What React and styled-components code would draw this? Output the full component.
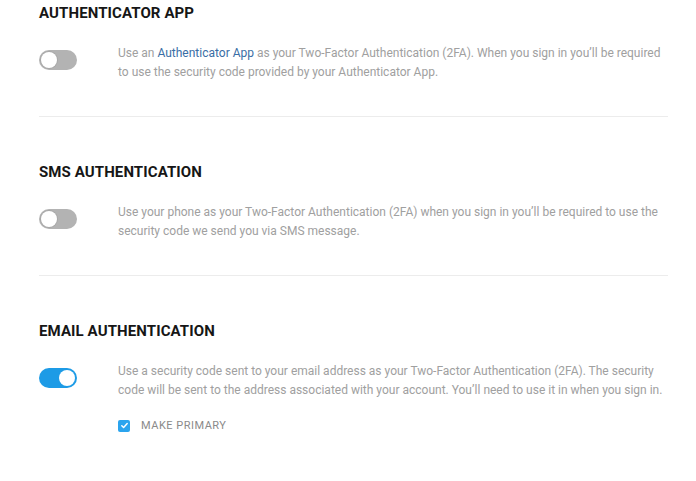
import styled, { createGlobalStyle } from "styled-components";

const GlobalStyle = createGlobalStyle`
  body {
    margin: 0;
    background: #ffffff;
    font-family: Roboto, "Liberation Sans", sans-serif;
  }
`;

const Page = styled.div`
  padding: 0 28px 0 39px;
`;

const Section = styled.section`
  padding: ${(p) => (p.$last ? "0" : "0 0 34px")};
  border-bottom: ${(p) => (p.$last ? "none" : "1px solid #ececec")};
  & + & {
    padding-top: 42px;
  }
`;

const Title = styled.h2`
  margin: 0;
  font-size: 15px;
  line-height: 26px;
  font-weight: 700;
  color: #161616;
  letter-spacing: 0.1px;
`;

const Row = styled.div`
  display: flex;
  align-items: flex-start;
  gap: 41px;
  margin-top: 18px;
`;

const Toggle = styled.button`
  position: relative;
  flex-shrink: 0;
  width: 38px;
  height: 20px;
  margin-top: 6px;
  padding: 0;
  border: none;
  border-radius: 10px;
  background: ${(p) => (p.$on ? "#1d9be6" : "#b3b3b3")};
  cursor: pointer;
`;

const Knob = styled.span`
  position: absolute;
  top: 2px;
  left: ${(p) => (p.$on ? "20px" : "2px")};
  width: 16px;
  height: 16px;
  border-radius: 50%;
  background: #fff;
  box-shadow: ${(p) => (p.$on ? "none" : "0 0 0 1px #a8a8a8")};
`;

const Body = styled.div`
  flex: 1;
`;

const Text = styled.p`
  margin: 0;
  font-size: 12px;
  line-height: 19px;
  color: #a0a0a0;
`;

const Link = styled.a`
  color: #3a6ea5;
  text-decoration: none;
`;

const CheckRow = styled.label`
  display: flex;
  align-items: center;
  gap: 11px;
  margin-top: 19px;
  font-size: 11px;
  color: #8a8a8a;
  letter-spacing: 0.5px;
`;

const Box = styled.span`
  display: flex;
  align-items: center;
  justify-content: center;
  width: 12px;
  height: 12px;
  border-radius: 2px;
  background: #2ba4ee;
`;

const sections = [
  {
    title: "AUTHENTICATOR APP",
    on: false,
    text: (
      <>
        Use an <Link href="#">Authenticator App</Link> as your Two-Factor Authentication (2FA). When you sign in
        you’ll be required to use the security code provided by your Authenticator App.
      </>
    ),
  },
  {
    title: "SMS AUTHENTICATION",
    on: false,
    text: (
      <>
        Use your phone as your Two-Factor Authentication (2FA) when you sign in you’ll be required to use the
        security code we send you via SMS message.
      </>
    ),
  },
  {
    title: "EMAIL AUTHENTICATION",
    on: true,
    primary: true,
    text: (
      <>
        Use a security code sent to your email address as your Two-Factor Authentication (2FA). The security
        code will be sent to the address associated with your account. You’ll need to use it in when you sign in.
      </>
    ),
  },
];

export default function App() {
  return (
    <>
      <GlobalStyle />
      <Page>
        {sections.map((s, i) => (
          <Section key={s.title} $last={i === sections.length - 1}>
            <Title>{s.title}</Title>
            <Row>
              <Toggle $on={s.on} aria-label={s.title}>
                <Knob $on={s.on} />
              </Toggle>
              <Body>
                <Text>{s.text}</Text>
                {s.primary && (
                  <CheckRow>
                    <Box>
                      <svg width="9" height="9" viewBox="0 0 10 10" fill="none">
                        <path d="M2 5.2l2 2 4-4.4" stroke="#fff" strokeWidth="1.6" strokeLinecap="round" strokeLinejoin="round" />
                      </svg>
                    </Box>
                    MAKE PRIMARY
                  </CheckRow>
                )}
              </Body>
            </Row>
          </Section>
        ))}
      </Page>
    </>
  );
}
